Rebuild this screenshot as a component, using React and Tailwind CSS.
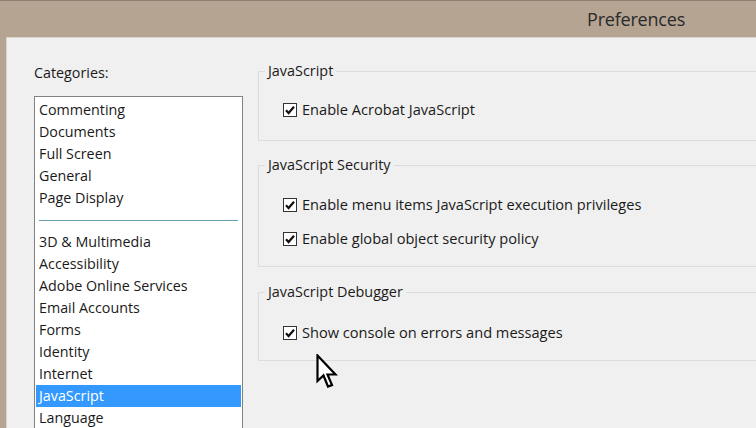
import React from 'react';

const font = { fontFamily: '"Open Sans", "Noto Sans", sans-serif' };

const topItems = ['Commenting', 'Documents', 'Full Screen', 'General', 'Page Display'];
const bottomItems = [
    '3D & Multimedia',
    'Accessibility',
    'Adobe Online Services',
    'Email Accounts',
    'Forms',
    'Identity',
    'Internet',
    'JavaScript',
    'Language',
];

const CheckBox = () => (
    <span className="w-[14px] h-[14px] border border-[#333] bg-white flex items-center justify-center shrink-0">
        <svg width="12" height="12" viewBox="0 0 12 12">
            <path d="M2 6.2 L4.6 9 L10 2.8" fill="none" stroke="#111" strokeWidth="2.2" />
        </svg>
    </span>
);

const Option = ({ children }) => (
    <label className="flex items-center gap-[5px] h-[22px] text-[14.6px] text-[#1a1a1a]">
        <CheckBox />
        <span>{children}</span>
    </label>
);

const Group = ({ title, className, children }) => (
    <fieldset className={`border border-[#dcdcdc] border-r-0 ${className}`}>
        <legend className="ml-[6px] px-[3px] text-[14.4px] text-[#1a1a1a] leading-[20px]">{title}</legend>
        <div className="pl-[24px]">{children}</div>
    </fieldset>
);

const ListItem = ({ label, selected }) => (
    <div
        className={`h-[22px] leading-[22px] px-[3px] text-[14.3px] ${
            selected ? 'bg-[#3399ff] text-white' : 'text-[#1a1a1a]'
        }`}
    >
        {label}
    </div>
);

const Cursor = () => (
    <svg width="22" height="36" viewBox="0 0 22 36" className="absolute left-[316px] top-[354px]">
        <path
            d="M1.5 1.5 L1.5 27 L7.5 21.5 L12 32.5 L16 31 L11.5 20.5 L19.5 20.5 Z"
            fill="white"
            stroke="black"
            strokeWidth="2.2"
            strokeLinejoin="miter"
        />
    </svg>
);

export default function App() {
    return (
        <div className="w-[756px] h-[428px] overflow-hidden bg-[#b5a492] relative" style={font}>
            {/* Title bar */}
            <div className="h-[37px] border-t border-[#8e7f70] flex items-center">
                <span className="ml-[587px] text-[18px] text-[#2a2a2a] tracking-[-0.2px]">Preferences</span>
            </div>

            {/* Body */}
            <div className="ml-[6px] h-[391px] bg-[#f0f0f0] border-l border-t border-[#dcd6cf] flex">
                {/* Categories */}
                <div className="pl-[27px] pt-[24px] w-[236px] shrink-0">
                    <div className="text-[14.3px] text-[#1a1a1a] h-[22px] leading-[22px]">Categories:</div>
                    <div className="mt-[12px] w-[209px] h-[400px] bg-white border border-[#828282] px-[1px] pt-[2px]">
                        {topItems.map((t) => (
                            <ListItem key={t} label={t} />
                        ))}
                        <div className="h-[22px] flex items-center px-[3px]">
                            <div className="w-full h-px bg-[#6c9fb4]" />
                        </div>
                        {bottomItems.map((t) => (
                            <ListItem key={t} label={t} selected={t === 'JavaScript'} />
                        ))}
                    </div>
                </div>

                {/* Settings */}
                <div className="flex-1 pl-[15px] pt-[23px] flex flex-col">
                    <Group title="JavaScript" className="h-[80px] pt-[18px]">
                        <Option>Enable Acrobat JavaScript</Option>
                    </Group>
                    <Group title="JavaScript Security" className="mt-[14px] h-[112px] pt-[19px]">
                        <div className="flex flex-col gap-[12px]">
                            <Option>Enable menu items JavaScript execution privileges</Option>
                            <Option>Enable global object security policy</Option>
                        </div>
                    </Group>
                    <Group title="JavaScript Debugger" className="mt-[15px] h-[79px] pt-[20px]">
                        <Option>Show console on errors and messages</Option>
                    </Group>
                </div>
            </div>

            <Cursor />
        </div>
    );
}
